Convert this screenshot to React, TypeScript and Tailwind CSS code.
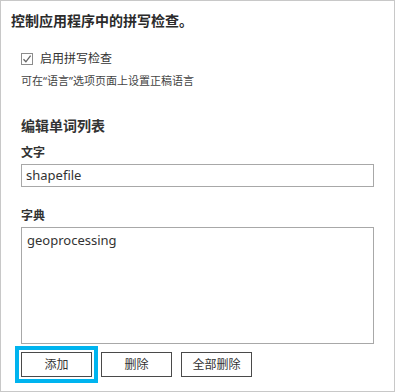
import React from "react";

const font = { fontFamily: '"Noto Sans", "Noto Sans CJK SC", sans-serif' };

function Btn({ label, focused }: { label: string; focused?: boolean }) {
  return (
    <div
      className={
        "w-[71px] h-[25px] border border-[#4a4a4a] bg-white flex items-center justify-center text-[12px] text-[#333] " +
        (focused ? "outline-4 outline-[#00b4ef] outline-offset-2" : "")
      }
    >
      {label}
    </div>
  );
}

export default function App() {
  return (
    <div
      className="w-[395px] h-[392px] border border-[#c8c8c8] bg-white text-[#333] overflow-hidden"
      style={font}
    >
      <div className="pl-[10px] pt-[10px] text-[14px] leading-[20px] font-bold text-[#2b2b2b]">
        控制应用程序中的拼写检查。
      </div>
      <div className="mt-[21px] h-[14px] pl-[20px] flex items-center gap-[7px]">
        <div className="w-[12px] h-[12px] border border-[#8c8c8c] bg-white flex items-center justify-center">
          <svg width="10" height="10" viewBox="0 0 10 10">
            <path d="M1.5 5.2 L3.9 7.8 L8.6 1.6" fill="none" stroke="#666" strokeWidth="1.3" />
          </svg>
        </div>
        <span className="text-[12px] leading-[14px] text-[#333]">启用拼写检查</span>
      </div>
      <div className="mt-[8px] pl-[20px] text-[11px] leading-[14px] text-[#444]">
        可在“语言”选项页面上设置正稿语言
      </div>
      <div className="mt-[28px] pl-[20px] text-[14px] leading-[20px] font-bold text-[#333]">
        编辑单词列表
      </div>
      <div className="mt-[9px] pl-[20px] text-[12px] leading-[16px] font-bold text-[#333]">
        文字
      </div>
      <div className="mt-[3px] ml-[20px] w-[353px] h-[23px] border border-[#a8a8a8] flex items-center pl-[4px] text-[13px] text-[#333]">
        shapefile
      </div>
      <div className="mt-[21px] pl-[20px] text-[12px] leading-[16px] font-bold text-[#333]">
        字典
      </div>
      <div className="mt-[3px] ml-[20px] w-[353px] h-[117px] border border-[#a8a8a8] pl-[5px] pt-[3px] text-[13px] leading-[18px] text-[#333]">
        geoprocessing
      </div>
      <div className="mt-[8px] ml-[20px] flex gap-[9px]">
        <Btn label="添加" focused />
        <Btn label="删除" />
        <Btn label="全部删除" />
      </div>
    </div>
  );
}
